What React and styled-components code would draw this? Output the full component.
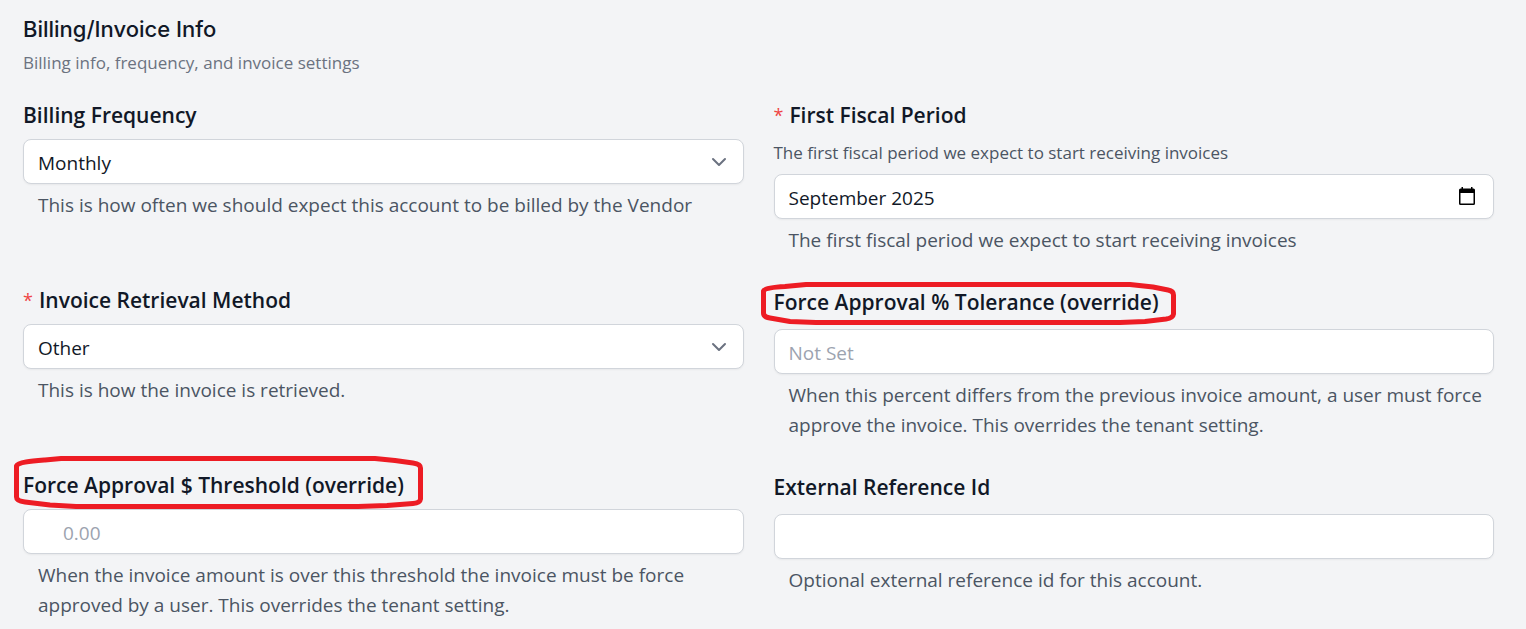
import React from "react";
import styled, { createGlobalStyle, css } from "styled-components";

const GlobalStyle = createGlobalStyle`
  *, *::before, *::after { box-sizing: border-box; }
  body {
    margin: 0;
    background: #f3f4f6;
    color: #111827;
    font-family: "Open Sans", "Noto Sans", sans-serif;
  }
`;

const Page = styled.main`
  padding: 14px 32px 9px 23px;
`;

const Header = styled.header`
  margin-bottom: 25px;
`;

const Title = styled.h2`
  margin: 0;
  font-family: Inter, sans-serif;
  font-size: 22px;
  font-weight: 500;
  line-height: 30px;
`;

const Subtitle = styled.p`
  margin: 7px 0 0;
  color: #6b7280;
  font-size: 17px;
  line-height: 24px;
`;

const Form = styled.form`
  display: grid;
  grid-template-columns: repeat(2, minmax(0, 1fr));
  gap: 30px;
`;

const Field = styled.div`
  display: flex;
  flex-direction: column;
  align-items: stretch;
`;

const LabelRow = styled.div`
  position: relative;
  display: flex;
  gap: 6px;
  margin-bottom: ${(p) => (p.$tall ? 10 : 9)}px;
  line-height: ${(p) => (p.$tall ? 34 : 30)}px;
  font-size: 21px;
`;

const Label = styled.label`
  font-weight: 600;
  white-space: nowrap;
`;

const Required = styled.span`
  color: #ef4444;
  font-size: 18px;
`;

const Description = styled.p`
  margin: 2px 0 9px;
  color: #4b5563;
  font-size: 17px;
  line-height: 24px;
`;

const control = css`
  width: 100%;
  height: 45px;
  margin: 0;
  padding: 2px 15px 0 14px;
  border: 1px solid #d1d5db;
  border-radius: 8px;
  background: #fff;
  box-shadow: 0 1px 2px rgba(0, 0, 0, 0.05);
  color: #111827;
  font-family: inherit;
  font-size: 19px;
  line-height: 30px;
`;

const TextInput = styled.input`
  ${control}
  display: block;
  padding-left: ${(p) => (p.$indent ? 39 : 14)}px;
  &::placeholder { color: #9ca3af; opacity: 1; }
`;

const ControlBox = styled.div`
  position: relative;
`;

const Select = styled.select`
  ${control}
  display: block;
  appearance: none;
`;

const Chevron = styled.svg`
  position: absolute;
  top: 10px;
  right: 13px;
  pointer-events: none;
`;

const PickerButton = styled.button`
  position: absolute;
  top: 8px;
  right: 13px;
  display: grid;
  place-items: center;
  width: 28px;
  height: 28px;
  padding: 0;
  border: 0;
  background: none;
  color: #000;
  cursor: pointer;
`;

const Help = styled.p`
  margin: 6px 0 0;
  padding-left: 15px;
  color: #4b5563;
  font-size: 19px;
  line-height: 30px;
`;

const Ring = styled.svg`
  position: absolute;
  top: ${(p) => p.$top}px;
  left: ${(p) => p.$left}px;
  overflow: visible;
  pointer-events: none;
`;

function SelectField({ id, value }) {
  return (
    <ControlBox>
      <Select id={id} defaultValue={value}>
        <option>{value}</option>
      </Select>
      <Chevron width="24" height="24" viewBox="0 0 24 24" fill="none" aria-hidden="true">
        <path d="M6 10L12 16L18 10" stroke="#6b7280" strokeWidth="2" strokeLinecap="round" strokeLinejoin="round" />
      </Chevron>
    </ControlBox>
  );
}

function MonthField({ id, value }) {
  return (
    <ControlBox>
      <TextInput id={id} type="text" defaultValue={value} />
      <PickerButton type="button" aria-label="Show month picker">
        <svg width="16" height="18" viewBox="0 0 16 18" aria-hidden="true">
          <path
            fill="currentColor"
            fillRule="evenodd"
            d="M2.5 0H4V1.5H12V0H13.5V1.5H14.5Q16 1.5 16 3V16.5Q16 18 14.5 18H1.5Q0 18 0 16.5V3Q0 1.5 1.5 1.5H2.5ZM1.5 6V16.5H14.5V6Z"
          />
        </svg>
      </PickerButton>
    </ControlBox>
  );
}

function FormField({ id, label, required, tall, description, help, ring, children }) {
  return (
    <Field>
      <LabelRow $tall={tall}>
        {required && <Required aria-hidden="true">*</Required>}
        <Label htmlFor={id}>{label}</Label>
        {ring}
      </LabelRow>
      {description && <Description>{description}</Description>}
      {children}
      <Help>{help}</Help>
    </Field>
  );
}

export default function App() {
  return (
    <>
      <GlobalStyle />
      <Page>
        <Header>
          <Title>Billing/Invoice Info</Title>
          <Subtitle>Billing info, frequency, and invoice settings</Subtitle>
        </Header>
        <Form>
          <FormField
            id="frequency"
            label="Billing Frequency"
            help="This is how often we should expect this account to be billed by the Vendor"
          >
            <SelectField id="frequency" value="Monthly" />
          </FormField>

          <FormField
            id="period"
            label="First Fiscal Period"
            required
            description="The first fiscal period we expect to start receiving invoices"
            help="The first fiscal period we expect to start receiving invoices"
          >
            <MonthField id="period" value="September 2025" />
          </FormField>

          <FormField
            id="method"
            label="Invoice Retrieval Method"
            required
            help="This is how the invoice is retrieved."
          >
            <SelectField id="method" value="Other" />
          </FormField>

          <FormField
            id="tolerance"
            label="Force Approval % Tolerance (override)"
            tall
            help="When this percent differs from the previous invoice amount, a user must force approve the invoice. This overrides the tenant setting."
            ring={
              <Ring $top={-3} $left={-13} width="415" height="43" viewBox="0 0 415 43" fill="none" aria-hidden="true">
                <path
                  d="M2.5 9C4 6 14 5 24 4.5L45 2.5H369L392 5L407 8Q412.5 9 412.5 13V32Q412 36 405 37L384 39.5L359 40.5H55L29 39.5L9 36Q2.5 35 2.5 31Z"
                  stroke="#ed1c24"
                  strokeWidth="5"
                  strokeLinejoin="round"
                />
              </Ring>
            }
          >
            <TextInput id="tolerance" type="text" placeholder="Not Set" />
          </FormField>

          <FormField
            id="threshold"
            label="Force Approval $ Threshold (override)"
            help="When the invoice amount is over this threshold the invoice must be force approved by a user. This overrides the tenant setting."
            ring={
              <Ring $top={-14} $left={-9} width="409" height="53" viewBox="0 0 409 53" fill="none" aria-hidden="true">
                <path
                  d="M2.5 10C4 6 18 5 31 4L47 2.5H361L381 4.5L399 7Q406.5 8 406.5 12V43Q406 47 399 47.5L373 49.5L344 50.5H62L36 49L11 46Q2.5 45 2.5 41Z"
                  stroke="#ed1c24"
                  strokeWidth="5"
                  strokeLinejoin="round"
                />
              </Ring>
            }
          >
            <TextInput id="threshold" type="text" placeholder="0.00" $indent />
          </FormField>

          <FormField
            id="reference"
            label="External Reference Id"
            tall
            help="Optional external reference id for this account."
          >
            <TextInput id="reference" type="text" />
          </FormField>
        </Form>
      </Page>
    </>
  );
}
